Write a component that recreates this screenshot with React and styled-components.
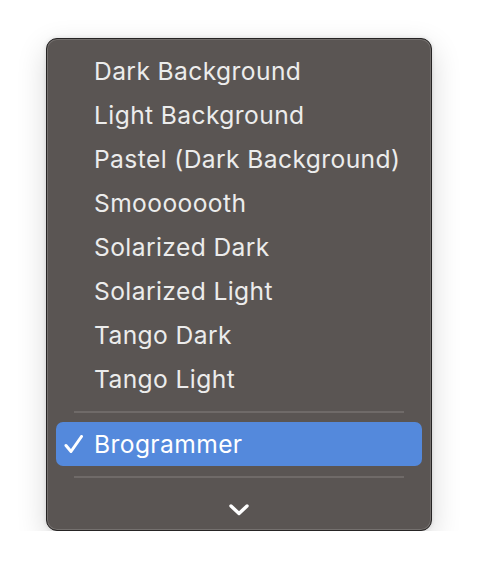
import React from "react";
import styled, { createGlobalStyle } from "styled-components";

const Global = createGlobalStyle`
  html, body {
    margin: 0;
    background: #ffffff;
  }
`;

const ITEMS = [
  "Dark Background",
  "Light Background",
  "Pastel (Dark Background)",
  "Smooooooth",
  "Solarized Dark",
  "Solarized Light",
  "Tango Dark",
  "Tango Light",
];

const Page = styled.div`
  padding: 38px 0 0 46px;
  font-family: Inter, "Noto Sans", sans-serif;
`;

const Menu = styled.div`
  box-sizing: border-box;
  width: 386px;
  height: 493px;
  padding: 10px 9px 0;
  display: flex;
  flex-direction: column;
  background: #5a5553;
  border: 1px solid #262424;
  border-radius: 11px;
  box-shadow: inset 0 0 0 1px rgba(255, 255, 255, 0.16),
    0 10px 30px rgba(0, 0, 0, 0.16), 0 0 4px rgba(0, 0, 0, 0.12);
`;

const Row = styled.div`
  height: 44px;
  display: flex;
  align-items: center;
  padding-left: 38px;
  position: relative;
  border-radius: 7px;
  font-size: 24.6px;
  letter-spacing: 0.4px;
  white-space: nowrap;
  color: ${(p) => (p.$active ? "#ffffff" : "#ececec")};
  background: ${(p) => (p.$active ? "#5489dc" : "transparent")};
`;

const Check = styled.svg`
  position: absolute;
  left: 8px;
  top: 13px;
`;

const Separator = styled.div`
  height: 21px;
  display: flex;
  align-items: center;
  padding: 0 18px;

  &::after {
    content: "";
    flex: 1;
    height: 2px;
    background: #6f6a68;
  }
`;

const More = styled.div`
  flex: 1;
  display: flex;
  justify-content: center;
  padding-top: 16px;
`;

export default function App() {
  return (
    <>
      <Global />
      <Page>
        <Menu>
          {ITEMS.map((name) => (
            <Row key={name}>{name}</Row>
          ))}
          <Separator />
          <Row $active>
            <Check width="20" height="19" viewBox="0 0 20 19">
              <path
                d="M2 10.5 L7 16.5 L17.5 1.5"
                fill="none"
                stroke="#ffffff"
                strokeWidth="3"
                strokeLinecap="round"
                strokeLinejoin="round"
              />
            </Check>
            Brogrammer
          </Row>
          <Separator />
          <More>
            <svg width="22" height="14" viewBox="0 0 22 14">
              <path
                d="M3 3 L11 10.5 L19 3"
                fill="none"
                stroke="#ffffff"
                strokeWidth="3.4"
                strokeLinecap="round"
                strokeLinejoin="round"
              />
            </svg>
          </More>
        </Menu>
      </Page>
    </>
  );
}
